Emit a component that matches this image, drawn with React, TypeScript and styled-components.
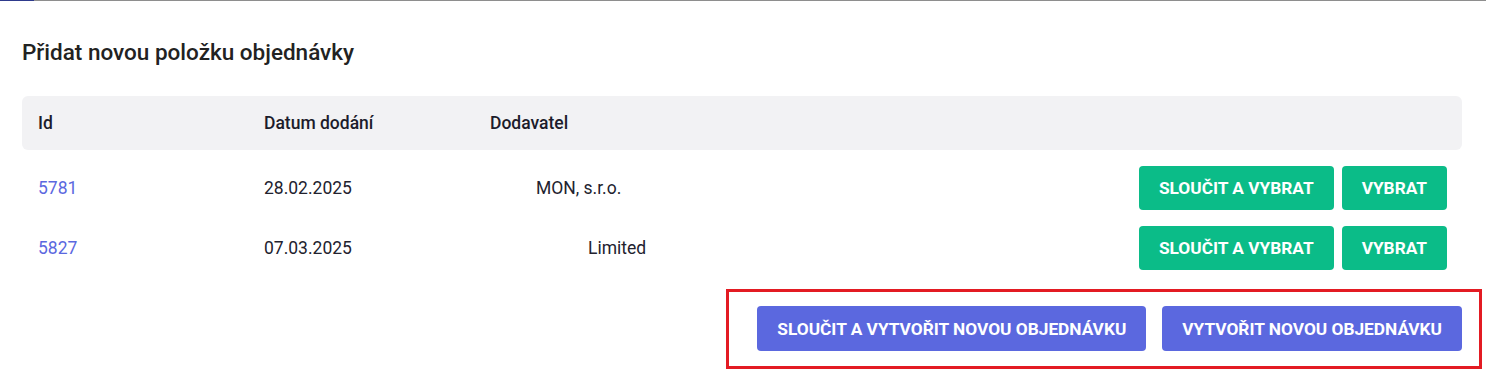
import * as React from 'react'
import styled, { createGlobalStyle } from 'styled-components'

const GlobalStyle = createGlobalStyle`
  html, body {
    margin: 0;
    padding: 0;
    background: #ffffff;
    font-family: Roboto, "Liberation Sans", Arial, sans-serif;
    color: #22222a;
  }
`

const Style = {
  Page: styled.div`
    display: flex;
    flex-direction: column;
    padding: 0 24px 0 22px;
  `,
  TopRule: styled.div`
    display: flex;
    height: 1px;
    margin: 0 -24px 0 -22px;
    background: #8e8e8e;
  `,
  TopRuleActive: styled.div`
    width: 34px;
    height: 1px;
    background: #2e3a8c;
  `,
  Title: styled.h2`
    margin: 37px 0 0;
    font-size: 22.5px;
    line-height: 28px;
    font-weight: 500;
    color: #222222;
  `,
  Table: styled.div`
    display: flex;
    flex-direction: column;
    margin-top: 30px;
  `,
  HeadRow: styled.div`
    display: grid;
    grid-template-columns: 226px 226px 1fr auto;
    align-items: center;
    height: 54px;
    padding: 0 16px;
    background: #f2f2f4;
    border-radius: 6px;
  `,
  HeadCell: styled.div`
    font-size: 17.5px;
    font-weight: 500;
    color: #1c1c2b;
  `,
  Body: styled.div`
    display: flex;
    flex-direction: column;
    padding-top: 8px;
  `,
  Row: styled.div`
    display: grid;
    grid-template-columns: 226px 226px 1fr auto;
    align-items: center;
    height: 60px;
    padding: 0 15px 0 16px;
  `,
  IdLink: styled.a`
    font-size: 17.5px;
    color: #5b68df;
    text-decoration: none;
    cursor: pointer;
  `,
  Cell: styled.div<{ $indent?: number }>`
    font-size: 17.5px;
    color: #22222e;
    padding-left: ${(p) => p.$indent ?? 0}px;
  `,
  Actions: styled.div`
    display: flex;
    gap: 8px;
  `,
  Button: styled.button<{ $variant: 'green' | 'indigo' }>`
    display: inline-flex;
    align-items: center;
    justify-content: center;
    height: ${(p) => (p.$variant === 'green' ? 44 : 45)}px;
    padding: 0 20px;
    border: none;
    border-radius: 4px;
    background: ${(p) => (p.$variant === 'green' ? '#0bbc88' : '#5b68df')};
    color: #ffffff;
    font-family: Roboto, "Liberation Sans", Arial, sans-serif;
    font-size: 17.3px;
    font-weight: 700;
    text-transform: uppercase;
    white-space: nowrap;
    cursor: pointer;
  `,
  Footer: styled.div`
    display: flex;
    justify-content: flex-end;
    margin-top: 11px;
    margin-right: -20px;
  `,
  Highlight: styled.div`
    display: flex;
    gap: 16px;
    padding: 14px 17px 15px 28px;
    border: 3px solid #e31b23;
  `,
}

type Order = {
  id: number
  date: string
  supplier: string
  indent: number
}

const orders: Order[] = [
  { id: 5781, date: '28.02.2025', supplier: 'MON, s.r.o.', indent: 46 },
  { id: 5827, date: '07.03.2025', supplier: 'Limited', indent: 98 },
]

const OrderRow = ({ order }: { order: Order }) => (
  <Style.Row>
    <Style.IdLink>{order.id}</Style.IdLink>
    <Style.Cell>{order.date}</Style.Cell>
    <Style.Cell $indent={order.indent}>{order.supplier}</Style.Cell>
    <Style.Actions>
      <Style.Button $variant="green">Sloučit a vybrat</Style.Button>
      <Style.Button $variant="green">Vybrat</Style.Button>
    </Style.Actions>
  </Style.Row>
)

const App = () => {
  return (
    <>
      <GlobalStyle />
      <Style.Page>
        <Style.TopRule>
          <Style.TopRuleActive />
        </Style.TopRule>
        <Style.Title>Přidat novou položku objednávky</Style.Title>
        <Style.Table>
          <Style.HeadRow>
            <Style.HeadCell>Id</Style.HeadCell>
            <Style.HeadCell>Datum dodání</Style.HeadCell>
            <Style.HeadCell>Dodavatel</Style.HeadCell>
            <span />
          </Style.HeadRow>
          <Style.Body>
            {orders.map((order) => (
              <OrderRow key={`order-row-${order.id}`} order={order} />
            ))}
          </Style.Body>
        </Style.Table>
        <Style.Footer>
          <Style.Highlight>
            <Style.Button $variant="indigo">Sloučit a vytvořit novou objednávku</Style.Button>
            <Style.Button $variant="indigo">Vytvořit novou objednávku</Style.Button>
          </Style.Highlight>
        </Style.Footer>
      </Style.Page>
    </>
  )
}

export default App
